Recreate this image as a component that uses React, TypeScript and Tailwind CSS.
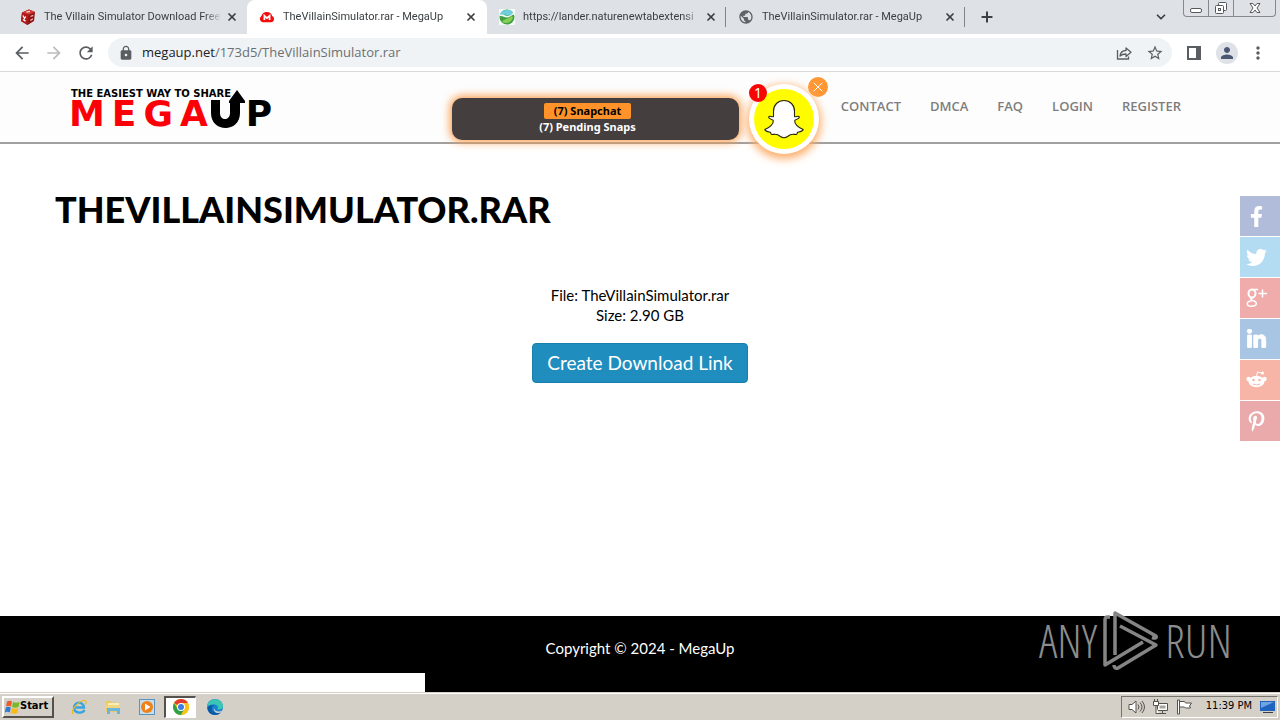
import type { ReactNode } from "react";
import { FaFacebookF, FaTwitter, FaLinkedinIn, FaPinterestP } from "react-icons/fa";
import { MdArrowBack, MdArrowForward, MdRefresh, MdLock, MdStarBorder, MdMoreVert, MdPerson, MdPublic } from "react-icons/md";
import { ChevronDown, Plus, X } from "lucide-react";

const DiceIcon = () => (
  <svg viewBox="0 0 16 16" className="size-4 shrink-0" aria-hidden="true">
    <path d="M2 3.5 9 .5l6 2.5-1 9-6.5 4L1 12z" fill="#8d1212" />
    <path d="M2 3.5 9 .5l6 2.5-6 2.8z" fill="#d43a34" />
    <path d="M2 3.5 9 5.8 7.5 16 1 12z" fill="#b01a1a" />
    <path d="M3 6.5l1.5 3 1.2-2M3 10.5l2.5 1.6" stroke="#fff" strokeWidth="1.3" fill="none" />
    <path d="M10.5 7.5l2.8-1.2M10.3 11.5l2.6-1.6" stroke="#f2b8b4" strokeWidth="1.3" />
    <path d="M6.5 3.2l3.5-.8" stroke="#fbdcda" strokeWidth="1.2" />
  </svg>
);

const CloudIcon = () => (
  <svg viewBox="0 0 16 16" className="size-4 shrink-0" aria-hidden="true">
    <path d="M3.6 13.2A3.4 3.4 0 0 1 2.4 7a5.6 5.6 0 0 1 10.8 0 3.3 3.3 0 0 1-.8 6.2z" fill="#f00d0d" />
    <path d="M5.4 11V6.8L8 9.2l2.6-2.4V11" stroke="#fff" strokeWidth="1.7" fill="none" />
  </svg>
);

const NatureIcon = () => (
  <svg viewBox="0 0 16 16" className="size-4 shrink-0" aria-hidden="true">
    <rect width="16" height="16" fill="#f4faf6" />
    <circle cx="8" cy="8" r="7.5" fill="#3fa046" />
    <path d="M.5 8A7.5 7.5 0 0 1 14.5 4.500L10 7 6 5.500 1 7z" fill="#6fcfe0" />
    <path d="M.6 6C4 4.500 6 7 9 7s4-3 6-3.500l.4 2C12 6 11 8.500 8 8.500S4 6.500 .6 7z" fill="#eef9f0" />
    <path d="M3 13c2-3.500 6-2 9-6l2 1c-1 5-6 7.500-11 5z" fill="#86cf52" />
  </svg>
);

const GlobeIcon = () => <MdPublic className="size-4 shrink-0 text-[#5f6368]" aria-hidden="true" />;

type TabData = { title: string; icon: ReactNode; active?: boolean; line?: boolean };

const tabs: TabData[] = [
  { title: "The Villain Simulator Download Free P", icon: <DiceIcon /> },
  { title: "TheVillainSimulator.rar - MegaUp", icon: <CloudIcon />, active: true },
  { title: "https://lander.naturenewtabextensi", icon: <NatureIcon />, line: true },
  { title: "TheVillainSimulator.rar - MegaUp", icon: <GlobeIcon />, line: true },
];

function Tab({ title, icon, active, line }: TabData) {
  return (
    <div
      className={
        active
          ? "flex h-[34px] w-[240px] items-center rounded-t-lg bg-white pl-3 text-[#3c4043]"
          : "flex h-[34px] w-[239px] items-center pl-3 text-[#3c4043]"
      }
    >
      {icon}
      <span className="ml-2 w-[178px] overflow-hidden whitespace-nowrap text-[11px] [mask-image:linear-gradient(to_right,black_90%,transparent)]">
        {title}
      </span>
      <button type="button" aria-label="Close tab" className="ml-0.5 flex size-4 items-center justify-center">
        <X className="size-3" strokeWidth={3.5} />
      </button>
      {line && <span className="ml-auto h-5 w-px bg-[#808489]" />}
    </div>
  );
}

function TabStrip() {
  return (
    <div className="flex h-[34px] bg-[#dee1e6] pl-2 font-[Roboto,sans-serif]">
      {tabs.map((t, i) => (
        <Tab key={i} {...t} />
      ))}
      <button type="button" aria-label="New tab" className="ml-3 flex w-5 items-center justify-center text-[#3c4043]">
        <Plus className="size-4" strokeWidth={3} />
      </button>
      <div className="ml-auto flex items-start text-[#3c4043]">
        <button type="button" aria-label="Search tabs" className="mr-3 flex h-[34px] w-5 items-center justify-center">
          <ChevronDown className="size-3.5" strokeWidth={3} />
        </button>
        <div className="mr-1 flex h-[17px] rounded-b border border-t-0 border-[#85888d]">
          <button type="button" aria-label="Minimize" className="flex w-[25px] items-end justify-center border-r border-[#85888d] pb-[3px]">
            <span className="h-[5px] w-3 rounded-xs border border-[#55585c] bg-white" />
          </button>
          <button type="button" aria-label="Restore" className="flex w-[25px] items-center justify-center border-r border-[#85888d]">
            <svg viewBox="0 0 14 14" className="size-3.5" fill="#fff" stroke="#55585c">
              <rect x="4.500" y="1.500" width="8" height="8" rx="1" />
              <rect x="1.500" y="4.500" width="8" height="8" rx="1" />
              <rect x="4.500" y="7.500" width="2" height="2" />
            </svg>
          </button>
          <button type="button" aria-label="Close window" className="flex w-[41px] items-center justify-center">
            <svg viewBox="0 0 12 12" className="size-3" fill="#fff" stroke="#55585c">
              <path d="M1 1.500h3l2 2.500 2-2.500h3L8 6l3 4.500H8L6 8l-2 2.500H1L4 6z" />
            </svg>
          </button>
        </div>
      </div>
    </div>
  );
}

function Toolbar() {
  return (
    <div className="flex h-[38px] items-center border-b border-[#d9dadc] bg-white pr-3 pl-3 text-[#5a5d61]">
      <button type="button" aria-label="Back" className="w-8"><MdArrowBack className="size-5" /></button>
      <button type="button" aria-label="Forward" className="w-8 text-[#babcbe]"><MdArrowForward className="size-5" /></button>
      <button type="button" aria-label="Reload" className="w-8"><MdRefresh className="size-5" /></button>
      <div className="flex h-[29px] flex-1 items-center rounded-full bg-[#f0f3f5]">
        <MdLock className="ml-2.5 size-4" aria-hidden="true" />
        <a href="#url" className="ml-2 flex-1 font-['Open_Sans',sans-serif] text-[13px] text-[#6b6f73]">
          <span className="text-[#202124]">megaup.net</span>/173d5/TheVillainSimulator.rar
        </a>
        <button type="button" aria-label="Share" className="mr-3.5">
          <svg viewBox="0 0 16 16" className="size-4" fill="none" stroke="currentColor" strokeWidth="1.300">
            <path d="M1.500 5v9h11v-2.500" />
            <path d="M4 11c.5-4 3-5.500 6-5.500V3l5 4.300-5 4.200V9C7.500 9 5.500 9.500 4 11z" strokeLinejoin="round" />
          </svg>
        </button>
        <button type="button" aria-label="Bookmark" className="mr-2"><MdStarBorder className="size-[18px]" /></button>
      </div>
      <button type="button" aria-label="Side panel" className="ml-3.5 flex w-4 justify-center">
        <svg viewBox="0 0 14 14" className="size-3.5"><path d="M0 0h14v14H0zM2 2v10h7V2z" fill="#5a5d61" fillRule="evenodd" /></svg>
      </button>
      <button type="button" aria-label="Profile" className="ml-3.5 flex size-[22px] items-center justify-center rounded-full bg-[#dee1e6] text-[#4a5876]">
        <MdPerson className="size-[18px]" />
      </button>
      <button type="button" aria-label="Menu" className="ml-2.5 flex w-5 justify-center"><MdMoreVert className="size-5" /></button>
    </div>
  );
}

function Logo() {
  return (
    <a href="#home" className="flex flex-col gap-px pl-3.5 font-['DejaVu_Sans',sans-serif] font-bold">
      <span className="pl-0.5 text-[10px] leading-[10px] text-black">THE EASIEST WAY TO SHARE</span>
      <span className="flex gap-[7px] text-[36px] leading-[27px] text-[#fb0007]">
        <span>M</span><span>E</span><span>G</span><span>A</span>
        <span className="-ml-1 flex gap-px">
          <svg viewBox="0 0 34 38" className="-mt-2.5 h-[38px] w-[34px]" role="img" aria-label="U">
            <path d="M0 10h9v13c0 8 10 8 10 0V13h-1v-2l8-11 8 11v2h-5v10c0 20-29 20-29 0z" fill="#000" />
          </svg>
          <span className="text-black">P</span>
        </span>
      </span>
    </a>
  );
}

const links = ["CONTACT", "DMCA", "FAQ", "LOGIN", "REGISTER"];

function SiteHeader() {
  return (
    <header className="h-[72px] border-b-2 border-[#a0a0a0] bg-[#fdfdfd]">
      <div className="mx-auto flex max-w-[1170px] items-start justify-between pt-[17px] pr-11">
        <Logo />
        <nav className="mt-[7px] flex gap-[29px] font-['Open_Sans',sans-serif] text-[13px] leading-5 font-semibold text-[#7e7e7e]">
          {links.map((l) => (
            <a key={l} href="#nav">{l}</a>
          ))}
        </nav>
      </div>
    </header>
  );
}

function SnapNotice() {
  return (
    <aside className="absolute top-[5px] left-[452px] flex w-[376px] items-start">
      <div className="mt-[21px] flex h-[42px] w-[287px] flex-col items-center rounded-[10px] bg-[#453e3e] pt-[5px] pr-4 font-['Noto_Sans',sans-serif] text-[11px] leading-4 font-bold text-white shadow-[0_0_8px_2px_#fb9d4c]">
        <span className="rounded-xs bg-[#ff9329] px-2.5 text-black">(7) Snapchat</span>
        <span>(7) Pending Snaps</span>
      </div>
      <div className="relative mt-[7px] ml-2.5 flex size-[70px] items-center justify-center rounded-full bg-white shadow-[0_3px_9px_2px_#fdae6b]">
        <div className="flex size-[60px] items-center justify-center rounded-full bg-[#fffc00]">
          <svg viewBox="0 0 40 40" className="size-10" role="img" aria-label="Snapchat">
            <path
              d="M20 1.500c6 0 10.500 4.500 10.500 10.500v5.500c1.500.8 3-.8 4.300 0 1.300 1-.2 2.300-4 3.700-.8 3.300 3.200 7.500 8.400 9.300-.7 2.200-3.700 2.300-5.700 2.800-.5.900-.2 2-1.200 2.200-2 0-3.600-.8-6 .2-2.200 1.100-3.500 3-6.300 3s-4.100-1.900-6.300-3c-2.400-1-4-.2-6-.2-1-.2-.7-1.300-1.200-2.200-2-.5-5-.6-5.700-2.800 5.200-1.800 9.200-6 8.400-9.300-3.800-1.400-5.300-2.700-4-3.700 1.300-.8 2.800.8 4.300 0V12C9.500 6 14 1.500 20 1.500z"
              fill="#fff" stroke="#26260a" strokeWidth="1.100" strokeLinejoin="round"
            />
          </svg>
        </div>
        <span className="absolute top-0 left-0 flex size-[18px] items-center justify-center rounded-full bg-[#f80606] font-['Noto_Sans',sans-serif] text-[14px] leading-[18px] text-white">1</span>
      </div>
      <button type="button" aria-label="Dismiss" className="-ml-[11px] flex size-5 items-center justify-center rounded-full bg-[#ff9735] text-white">
        <X className="size-4" strokeWidth={1.5} />
      </button>
    </aside>
  );
}

function GooglePlus() {
  return (
    <svg viewBox="0 0 22 20" className="h-5 w-[22px]" fill="none" stroke="currentColor" strokeWidth="1.500" aria-hidden="true">
      <ellipse cx="6" cy="5.500" rx="3.500" ry="4" strokeWidth="2" />
      <path d="M12 1.500H6M7 9.500c-3.500 1-2.500 2.500.5 3.300 4.500 1.400 3.500 5.500-2 5.500-5.500 0-6-5 .5-5.500M16.500 1.500v8M12.500 5.500h8.500" />
    </svg>
  );
}

function RedditFace() {
  return (
    <svg viewBox="0 0 21 21" className="size-[21px]" aria-hidden="true">
      <ellipse cx="10.500" cy="11.500" rx="8" ry="5.800" fill="#fff" />
      <circle cx="2.500" cy="9" r="2.200" fill="#fff" />
      <circle cx="18.500" cy="9" r="2.200" fill="#fff" />
      <circle cx="16.500" cy="3" r="1.500" fill="#fff" />
      <path d="M10.500 6l1-4 4 1" fill="none" stroke="#fff" />
      <circle cx="7.500" cy="10" r="1.300" fill="#f6b5a6" />
      <circle cx="13.500" cy="10" r="1.300" fill="#f6b5a6" />
      <path d="M7 14q3.500 2 7 0" fill="none" stroke="#f6b5a6" />
    </svg>
  );
}

function SocialBar() {
  return (
    <div className="absolute top-[124px] right-0 flex w-10 flex-col gap-px text-white">
      <a href="#facebook" aria-label="Facebook" className="flex h-10 items-center bg-[#b0bcd9] pl-1.5"><FaFacebookF className="size-[21px]" /></a>
      <a href="#twitter" aria-label="Twitter" className="flex h-10 items-center bg-[#b3dcf2] pl-1.5"><FaTwitter className="size-[21px]" /></a>
      <a href="#google" aria-label="Google Plus" className="flex h-10 items-center bg-[#f0abab] pl-1.5"><GooglePlus /></a>
      <a href="#linkedin" aria-label="LinkedIn" className="flex h-10 items-center bg-[#a9c5e4] pl-1.5">
        <FaLinkedinIn className="size-[21px]" stroke="currentColor" strokeWidth={24} />
      </a>
      <a href="#reddit" aria-label="Reddit" className="flex h-10 items-center bg-[#f6b5a6] pl-1.5"><RedditFace /></a>
      <a href="#pinterest" aria-label="Pinterest" className="flex h-10 items-center bg-[#eaa9ab] pl-1.5"><FaPinterestP className="size-[21px]" /></a>
    </div>
  );
}

function AnyRun() {
  return (
    <div className="absolute right-12 bottom-5 flex h-16 items-center gap-1.5 font-['Open_Sans_Condensed_Light','Open_Sans_Condensed','Roboto_Condensed',sans-serif] text-[46px] leading-none font-light text-[#8c8c8c]">
      <span>ANY</span>
      <svg viewBox="0 0 56 62" className="h-[62px] w-14" fill="none" stroke="#858585" strokeWidth="3.500" strokeLinejoin="round" aria-hidden="true">
        <path d="M7 8H4.500Q2 8 2 11v45l38-23" />
        <path d="M12 46V4l41 23q1 3-4 1.500" />
        <path d="M17 17l36 19-38 23q-4 1-4-3" />
      </svg>
      <span>RUN</span>
    </div>
  );
}

function Taskbar() {
  return (
    <div className="flex h-7 items-center border-t border-[#d4d0c8] bg-[#d4d0c8] font-['DejaVu_Sans_Condensed','DejaVu_Sans',sans-serif] text-[11px] text-black shadow-[inset_0_1px_0_#fff]">
      <button type="button" className="ml-0.5 flex h-[22px] w-[52px] items-center border-2 border-t-white border-r-[#55524c] border-b-[#55524c] border-l-white font-bold">
        <svg viewBox="0 0 16 16" className="size-4 shrink-0" aria-hidden="true">
          <path d="M3 2.500c2-1 3.500-.8 5 0L7 7.500c-2-1-3-1-5 0z" fill="#ec5b2b" />
          <path d="M9 3c2 1 4 1 6.500 0l-1 5c-2.500 1-4.500 1-6.500 0z" fill="#7ab829" />
          <path d="M1.800 8.500c2-1 3.500-.8 5 0l-1 5c-2-1-3-1-5 0z" fill="#2d7cd0" />
          <path d="M7.800 9c2 1 4 1 6.500 0l-1 5c-2.500 1-4.500 1-6.500 0z" fill="#fbb914" />
        </svg>
        Start
      </button>
      <div className="ml-2 flex">
        <button type="button" aria-label="Internet Explorer" className="flex h-[22px] w-[34px] items-center justify-center">
          <svg viewBox="0 0 16 16" className="size-4" fill="none">
            <path d="M13.500 11c-2.200 4-10.500 3.500-10.500-2.500S12.500 2 13 8.500H4.500" stroke="#35a4e0" strokeWidth="2.400" />
            <path d="M2 15C-1 12 8 1 14 1.500c2 .3 1 3 0 4" stroke="#efb91e" strokeWidth="1.200" />
          </svg>
        </button>
        <button type="button" aria-label="Explorer" className="flex h-[22px] w-[34px] items-center justify-center">
          <svg viewBox="0 0 16 16" className="size-4">
            <path d="M1 2h5l1 1.500h7V13H1z" fill="#e9c968" />
            <path d="M3 4h11v6H3z" fill="#f9edb8" />
            <path d="M2 9h13v6h-3v-3H5v3H2z" fill="#69b7dc" />
            <path d="M1 6h14v3H1z" fill="#f0d67e" />
          </svg>
        </button>
        <button type="button" aria-label="Media Player" className="flex h-[22px] w-[34px] items-center justify-center">
          <svg viewBox="0 0 16 16" className="size-4">
            <rect x=".5" y=".5" width="15" height="15" fill="#c5ddec" stroke="#5a93bd" />
            <circle cx="8" cy="8" r="6" fill="#f28018" />
            <path d="M6 4.500v7L11.500 8z" fill="#fff" />
          </svg>
        </button>
        <button type="button" aria-label="Chrome" className="flex h-[22px] w-8 items-center justify-center border border-t-2 border-l-2 border-t-[#55524c] border-r-white border-b-white border-l-[#55524c] bg-white">
          <svg viewBox="0 0 16 16" className="size-4">
            <circle cx="8" cy="8" r="8" fill="#fbc116" />
            <path d="M8 8 1.100 4A8 8 0 0 1 14.900 4z" fill="#e33b2e" />
            <path d="M1.100 4A8 8 0 0 0 8 16l3.500-6L8 8 4.500 10z" fill="#2da14c" />
            <path d="M8 4h6.900A8 8 0 0 1 8 16l3.500-6z" fill="#fbc116" />
            <circle cx="8" cy="8" r="4" fill="#fff" />
            <circle cx="8" cy="8" r="3" fill="#3b7de9" />
          </svg>
        </button>
        <button type="button" aria-label="Edge" className="ml-0.5 flex h-[22px] w-[34px] items-center justify-center">
          <svg viewBox="0 0 16 16" className="size-4">
            <circle cx="8" cy="8" r="8" fill="#1683d2" />
            <path d="M0 8C.5-2 15.500-2.500 16 7c0 3-3 4-6 3.500 1.500-1 1.500-5-2.500-5C4 5.500 1 6 0 8z" fill="#3bc5b2" />
            <path d="M5 8c-1 4 3 7 8.500 5.800C9 18 1 16 .5 9 2 6 6 5.500 8 6.500 6.500 6.500 5.300 7 5 8z" fill="#0c59a4" />
            <path d="M7 8.500c0 4 5 5 8.500 3l-1.500 2c-4 1.500-8-.5-7-5z" fill="#d4d0c8" />
          </svg>
        </button>
      </div>
      <div className="mr-0.5 ml-auto flex h-[22px] items-center border border-t-[#77746e] border-r-white border-b-white border-l-[#77746e] pr-px pl-1.5">
        <svg viewBox="0 0 18 16" className="h-4 w-[18px]" fill="#fff" stroke="#55524c" aria-hidden="true">
          <path d="M1 5.500h3L8 2v12l-4-3.500H1z" />
          <path d="M10 5.500q2 2.500 0 5M12 3.500q4 4.500 0 9M14 2q5 6 0 12" fill="none" />
        </svg>
        <svg viewBox="0 0 16 16" className="ml-1.5 size-4" fill="#fff" stroke="#55524c" aria-hidden="true">
          <path d="M5.500 4.500h10v7h-10zM7 14.500h7M10.500 12v2" />
          <path d="M7.500 6.500h6v3h-6z" fill="#a8a59e" stroke="none" />
          <path d="M1.500 2.500h5v4h-5zM2.500 0v2M5.500 0v2M4 7v7.500h3" />
        </svg>
        <svg viewBox="0 0 16 16" className="ml-2 size-4" fill="#fff" stroke="#55524c" aria-hidden="true">
          <path d="M1.500 1v14h2V1zM3.500 2.500h5l1 1.500h6l-2 3 1 2h-5L8.500 8h-5z" />
        </svg>
        <time className="ml-3.5 whitespace-nowrap">11:39 PM</time>
        <svg viewBox="0 0 16 14" className="ml-2 h-3.5 w-4" aria-hidden="true">
          <path d="M0 1h15v10H0z" fill="#2063bf" />
          <path d="M1 2h13L1 8z" fill="#6fa4e4" />
          <path d="M3 12h10v1H3z" fill="#3b3f48" />
        </svg>
      </div>
    </div>
  );
}

export default function App() {
  return (
    <div className="flex min-h-screen flex-col bg-white">
      <TabStrip />
      <Toolbar />
      <div className="relative flex flex-1 flex-col font-['Lato',sans-serif] text-black">
        <SiteHeader />
        <main className="mx-auto w-full max-w-[1170px] flex-1">
          <h1 className="mt-[45px] text-[36px] leading-10 font-black">THEVILLAINSIMULATOR.RAR</h1>
          <div className="mt-14 flex flex-col items-center text-[15px] leading-5">
            <p>File: TheVillainSimulator.rar</p>
            <p>Size: 2.90 GB</p>
            <button type="button" className="mt-[18px] h-10 rounded border border-[#1a80ab] bg-[#1f8dbe] px-3.5 text-[19px] text-white">
              Create Download Link
            </button>
          </div>
        </main>
        <footer className="flex flex-col bg-black text-white">
          <p className="pt-[22px] text-center text-[15px] leading-5">Copyright © 2024 - MegaUp</p>
          <div className="mt-[15px] h-[19px] w-[425px] bg-white" />
        </footer>
        <SnapNotice />
        <SocialBar />
        <AnyRun />
      </div>
      <Taskbar />
    </div>
  );
}
